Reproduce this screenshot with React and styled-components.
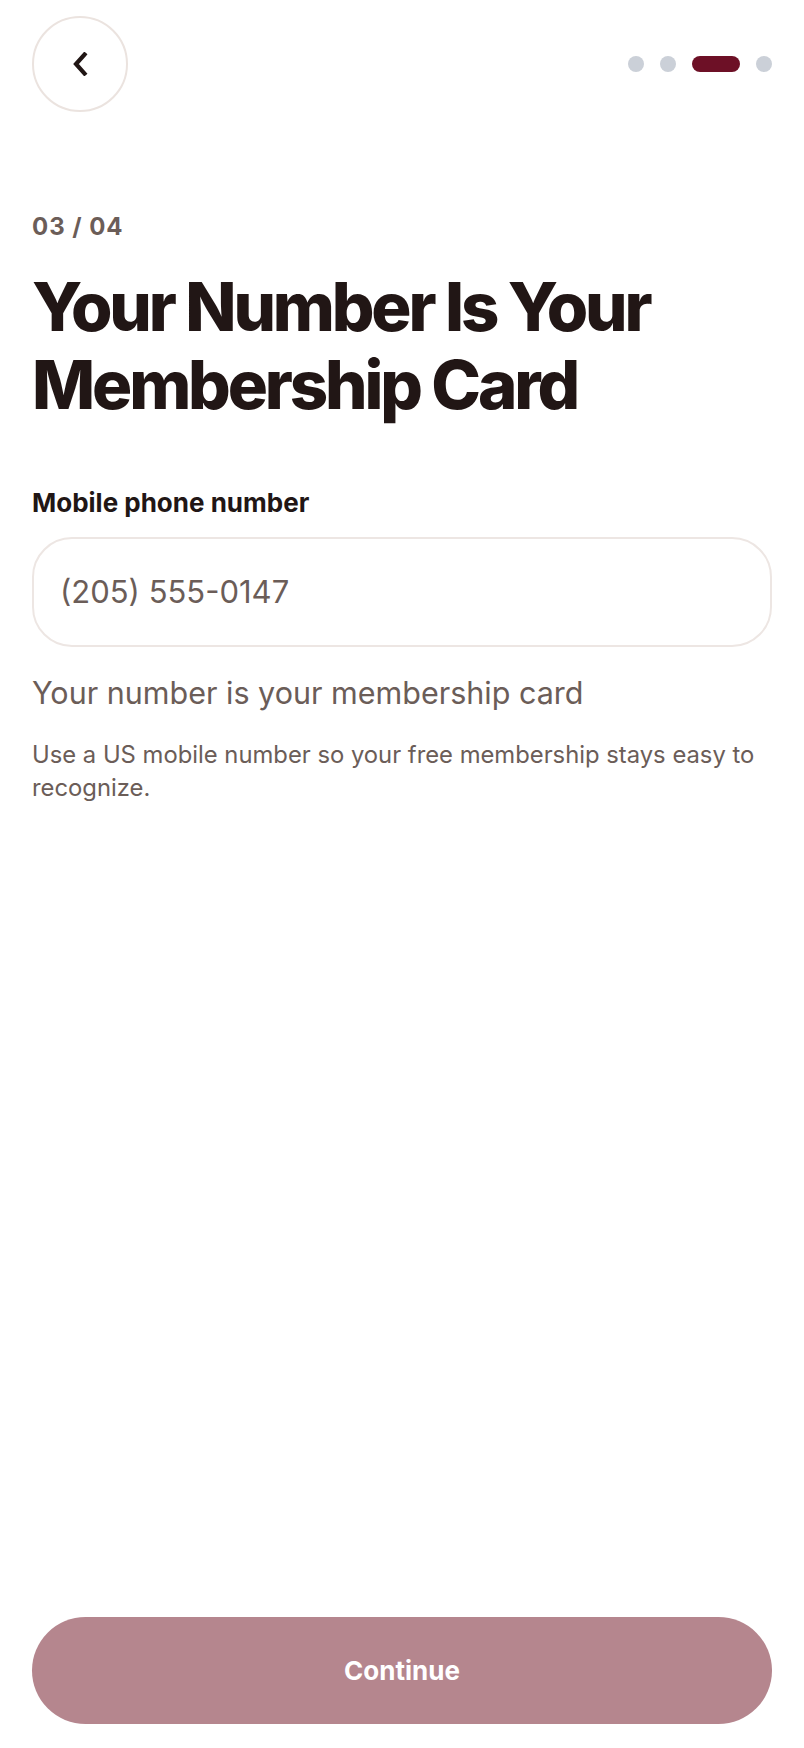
import React, {useState} from 'react';
import styled, {createGlobalStyle} from 'styled-components';

const GlobalStyle = createGlobalStyle`
  * {
    box-sizing: border-box;
  }
  html, body {
    margin: 0;
    padding: 0;
    background: #ffffff;
  }
  body {
    font-family: Inter, "Noto Sans", "Liberation Sans", sans-serif;
    color: #211615;
    -webkit-font-smoothing: antialiased;
  }
`;

const Page = styled.div`
  min-height: 100vh;
  display: flex;
  flex-direction: column;
  padding: 16px 32px 24px;
`;

const Header = styled.header`
  display: flex;
  align-items: center;
  justify-content: space-between;
  height: 96px;
`;

const BackButton = styled.button`
  width: 96px;
  height: 96px;
  border-radius: 50%;
  border: 2px solid #ebe3df;
  background: #ffffff;
  display: flex;
  align-items: center;
  justify-content: center;
  padding: 0;
  cursor: pointer;
  color: #211615;
`;

const Progress = styled.div`
  display: flex;
  align-items: center;
  gap: 16px;
`;

const Dot = styled.span`
  display: block;
  height: 16px;
  width: ${p => (p.$active ? '48px' : '16px')};
  border-radius: 8px;
  background: ${p => (p.$active ? '#6d1026' : '#cbd0d8')};
`;

const Content = styled.main`
  display: flex;
  flex-direction: column;
  padding-top: 101px;
`;

const Step = styled.div`
  font-size: 24px;
  line-height: 1.2;
  font-weight: 700;
  letter-spacing: 0.04em;
  color: #6b5d58;
`;

const Title = styled.h1`
  margin: 26px 0 0;
  font-size: 67px;
  line-height: 78px;
  font-weight: 800;
  letter-spacing: -0.047em;
  color: #211615;
`;

const Label = styled.label`
  display: block;
  margin-top: 62px;
  font-size: 26px;
  line-height: 34px;
  font-weight: 700;
  color: #211615;
`;

const PhoneInput = styled.input`
  margin-top: 17px;
  width: 100%;
  height: 110px;
  border: 2px solid #ede6e3;
  border-radius: 40px;
  padding: 0 26px;
  font-family: inherit;
  font-size: 31px;
  color: #6b5d58;
  background: #ffffff;
  outline: none;
`;

const Helper = styled.p`
  margin: 26px 0 0;
  font-size: 30.5px;
  line-height: 39px;
  font-weight: 400;
  color: #6b5d58;
`;

const Note = styled.p`
  margin: 26px 0 0;
  font-size: 23.8px;
  line-height: 33px;
  font-weight: 400;
  color: #6b5d58;
`;

const ContinueButton = styled.button`
  margin-top: auto;
  width: 100%;
  height: 107px;
  border: none;
  border-radius: 54px;
  background: #b5868e;
  color: #ffffff;
  font-family: inherit;
  font-size: 26px;
  font-weight: 700;
  cursor: pointer;
`;

const ChevronLeft = () => (
  <svg width="16" height="24" viewBox="0 0 16 24" fill="none">
    <path
      d="M12.5 2.5L4 12L12.5 21.5"
      stroke="currentColor"
      strokeWidth="4.2"
      strokeLinecap="square"
      strokeLinejoin="miter"
    />
  </svg>
);

const steps = [1, 2, 3, 4];

export default function App() {
  const [phone, setPhone] = useState('(205) 555-0147');
  const current = 3;

  return (
    <>
      <GlobalStyle />
      <Page>
        <Header>
          <BackButton aria-label="Back">
            <ChevronLeft />
          </BackButton>
          <Progress>
            {steps.map(s => (
              <Dot key={s} $active={s === current} />
            ))}
          </Progress>
        </Header>
        <Content>
          <Step>03 / 04</Step>
          <Title>
            Your Number Is Your
            <br />
            Membership Card
          </Title>
          <Label htmlFor="phone">Mobile phone number</Label>
          <PhoneInput
            id="phone"
            type="tel"
            value={phone}
            onChange={e => setPhone(e.target.value)}
          />
          <Helper>Your number is your membership card</Helper>
          <Note>
            Use a US mobile number so your free membership stays easy to
            recognize.
          </Note>
        </Content>
        <ContinueButton>Continue</ContinueButton>
      </Page>
    </>
  );
}
